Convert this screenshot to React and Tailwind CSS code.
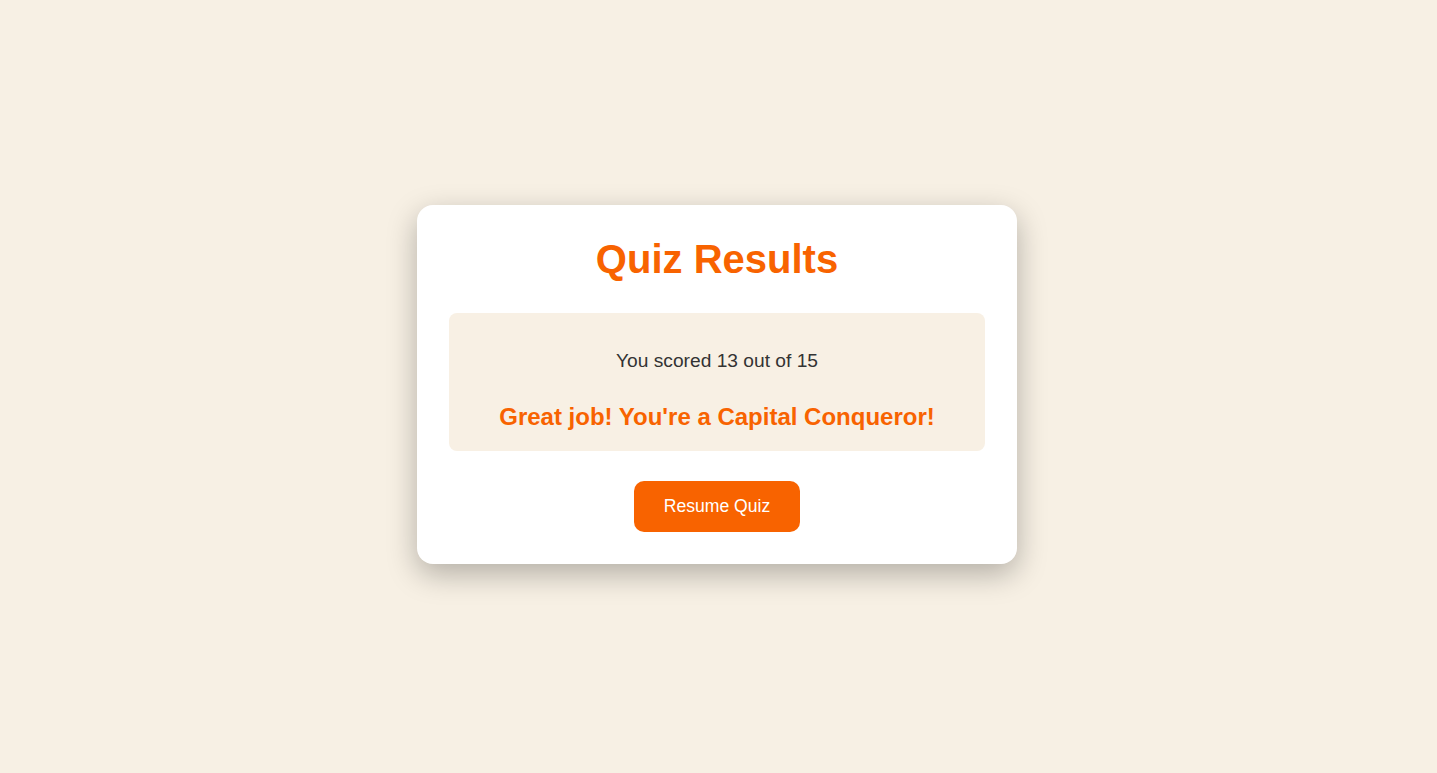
export default function App() {
  const score = 13;
  const total = 15;

  return (
    <div className="flex min-h-screen items-center justify-center bg-[#f7f0e4] pr-[3px] pb-[5px] font-['Liberation_Sans',Arial,sans-serif]">
      <div className="w-[600px] rounded-2xl bg-white px-8 pt-8 pb-8 text-center shadow-[0_10px_30px_rgba(0,0,0,0.28)]">
        <h1 className="mb-[31px] text-[40px] font-bold leading-[45px] text-[#f86300]">Quiz Results</h1>

        {/* Score box */}
        <div className="rounded-lg bg-[#f8f0e4] py-5">
          <p className="mt-[17px] text-[19.2px] leading-[22px] text-[#333]">
            You scored {score} out of {total}
          </p>
          <p className="mt-[31px] text-[24px] font-bold leading-[28px] text-[#f86300]">
            Great job! You're a Capital Conqueror!
          </p>
        </div>

        <button className="mt-[30px] rounded-[10px] bg-[#f86300] px-[30px] py-[15.5px] text-[17.6px] leading-[20px] text-white">
          Resume Quiz
        </button>
      </div>
    </div>
  );
}
